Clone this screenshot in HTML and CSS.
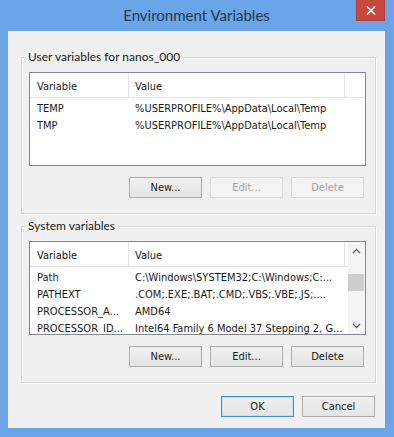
FILE: index.html
```html
<!DOCTYPE html>
<html lang="en">
<head>
    <meta charset="UTF-8">
    <meta name="viewport" content="width=device-width, initial-scale=1.0">
    <title>Environment Variables</title>
    <link rel="stylesheet" href="styles.css">
</head>
<body>
    <div class="window">
        <header class="titlebar">
            <h1 class="title">Environment Variables</h1>
            <button class="close" aria-label="Close">
                <svg width="10" height="9" viewBox="0 0 10 9">
                    <path d="M1 0.5 L9 8.5 M9 0.5 L1 8.5" stroke="#fff" stroke-width="1.6" fill="none"/>
                </svg>
            </button>
        </header>

        <main class="client">
            <fieldset class="group">
                <legend>User variables for nanos_000</legend>
                <div class="group-body">
                    <div class="list">
                        <div class="list-view">
                            <div class="list-head">
                                <span class="col-name">Variable</span>
                                <span class="col-value">Value</span>
                            </div>
                            <div class="row">
                                <span class="col-name">TEMP</span>
                                <span class="col-value">%USERPROFILE%\AppData\Local\Temp</span>
                            </div>
                            <div class="row">
                                <span class="col-name">TMP</span>
                                <span class="col-value">%USERPROFILE%\AppData\Local\Temp</span>
                            </div>
                        </div>
                    </div>
                    <div class="buttons">
                        <button class="btn">New...</button>
                        <button class="btn" disabled>Edit...</button>
                        <button class="btn" disabled>Delete</button>
                    </div>
                </div>
            </fieldset>

            <fieldset class="group">
                <legend>System variables</legend>
                <div class="group-body">
                    <div class="list">
                        <div class="list-view">
                            <div class="list-head">
                                <span class="col-name">Variable</span>
                                <span class="col-value">Value</span>
                            </div>
                            <div class="row">
                                <span class="col-name">Path</span>
                                <span class="col-value">C:\Windows\SYSTEM32;C:\Windows;C:...</span>
                            </div>
                            <div class="row">
                                <span class="col-name">PATHEXT</span>
                                <span class="col-value">.COM;.EXE;.BAT;.CMD;.VBS;.VBE;.JS;....</span>
                            </div>
                            <div class="row">
                                <span class="col-name">PROCESSOR_A...</span>
                                <span class="col-value">AMD64</span>
                            </div>
                            <div class="row">
                                <span class="col-name">PROCESSOR_ID...</span>
                                <span class="col-value">Intel64 Family 6 Model 37 Stepping 2, G...</span>
                            </div>
                        </div>
                        <div class="scrollbar">
                            <span class="arrow">
                                <svg width="9" height="6" viewBox="0 0 9 6"><path d="M1 5 L4.5 1.5 L8 5" stroke="#606060" stroke-width="1.3" fill="none"/></svg>
                            </span>
                            <span class="track"><span class="thumb"></span></span>
                            <span class="arrow">
                                <svg width="9" height="6" viewBox="0 0 9 6"><path d="M1 1 L4.5 4.5 L8 1" stroke="#606060" stroke-width="1.3" fill="none"/></svg>
                            </span>
                        </div>
                    </div>
                    <div class="buttons">
                        <button class="btn">New...</button>
                        <button class="btn">Edit...</button>
                        <button class="btn">Delete</button>
                    </div>
                </div>
            </fieldset>

            <div class="footer">
                <button class="btn default">OK</button>
                <button class="btn">Cancel</button>
            </div>
        </main>
    </div>
</body>
</html>
```

FILE: styles.css
```css
:root {
  --clr-frame: #6ba5e8;
  --clr-face: #f0f0f0;
  --clr-title: #1d3654;
  --clr-text: #1a1a1a;
  --ff-ui: Lato, "Open Sans", sans-serif;
  --ff-dlg: "DejaVu Sans Condensed", "DejaVu Sans", sans-serif;
}

*,
::after,
::before {
  margin: 0;
  padding: 0;
  box-sizing: border-box;
}

body {
  background: var(--clr-frame);
}

.window {
  width: 394px;
  height: 437px;
  background: var(--clr-frame);
  padding: 0 9px 9px 8px;
  display: flex;
  flex-direction: column;
  position: relative;
}

.titlebar {
  height: 31px;
  display: flex;
  align-items: center;
  justify-content: center;
}

.title {
  font-family: var(--ff-ui);
  font-weight: 400;
  font-size: 15px;
  color: var(--clr-title);
  padding-bottom: 1px;
}

.close {
  position: absolute;
  top: 0;
  right: 9px;
  width: 29px;
  height: 21px;
  border: 1px solid #b23a36;
  border-top: 0;
  background: #c7483f;
  display: grid;
  place-items: center;
}

.close svg {
  display: block;
}

.client {
  flex: 1;
  background: var(--clr-face);
  padding: 18px 10px 11px 13px;
  display: flex;
  flex-direction: column;
}

.group {
  border: 1px solid #d5d5d5;
  box-shadow: inset 1px 1px 0 #fff, 1px 1px 0 #fff;
  min-width: 0;
  margin-right: -1px;
}

.group + .group {
  margin-top: 4px;
}

.group legend {
  font-family: var(--ff-ui);
  font-size: 12px;
  line-height: 16px;
  color: var(--clr-text);
  margin-left: 4px;
  padding: 0 2px;
}

.group-body {
  padding: 7px 9px 15px 7px;
}

.list {
  height: 94px;
  background: #fff;
  border: 1px solid #828790;
  display: flex;
}

.list-view {
  flex: 1;
  font-family: var(--ff-dlg);
  font-size: 11px;
  color: var(--clr-text);
  overflow: hidden;
}

.list-head {
  height: 25px;
  display: flex;
  border-bottom: 1px solid #e5e5e5;
}

.list-head span {
  display: flex;
  align-items: center;
  padding-top: 3px;
  border-right: 1px solid #e5e5e5;
}

.row {
  height: 17px;
  display: flex;
  align-items: center;
  padding-top: 3px;
}

.col-name {
  width: 99px;
  padding-left: 7px;
  white-space: nowrap;
  flex-shrink: 0;
}

.col-value {
  width: 216px;
  padding-left: 6px;
  white-space: nowrap;
  flex-shrink: 0;
}

.scrollbar {
  width: 17px;
  background: #f4f4f4;
  display: flex;
  flex-direction: column;
}

.arrow {
  height: 17px;
  display: grid;
  place-items: center;
}

.track {
  flex: 1;
  padding-top: 15px;
}

.thumb {
  display: block;
  height: 17px;
  margin: 0 1px 0 0;
  background: #cdcdcd;
}

.buttons {
  display: flex;
  justify-content: flex-end;
  gap: 8px;
  margin-top: 11px;
  padding-right: 2px;
}

.btn {
  width: 73px;
  height: 21px;
  font-family: var(--ff-dlg);
  font-size: 11px;
  color: var(--clr-text);
  border: 1px solid #acacac;
  background: linear-gradient(#f0f0f0, #e5e5e5);
}

.btn:disabled {
  color: #a3a3a3;
  border-color: #d9d9d9;
  background: #f4f4f4;
}

.btn.default {
  border-color: #3c8fd8;
  box-shadow: inset 0 0 0 1px #c4e0f7;
}

.footer {
  margin-top: 13px;
  display: flex;
  justify-content: flex-end;
  gap: 8px;
}
```
